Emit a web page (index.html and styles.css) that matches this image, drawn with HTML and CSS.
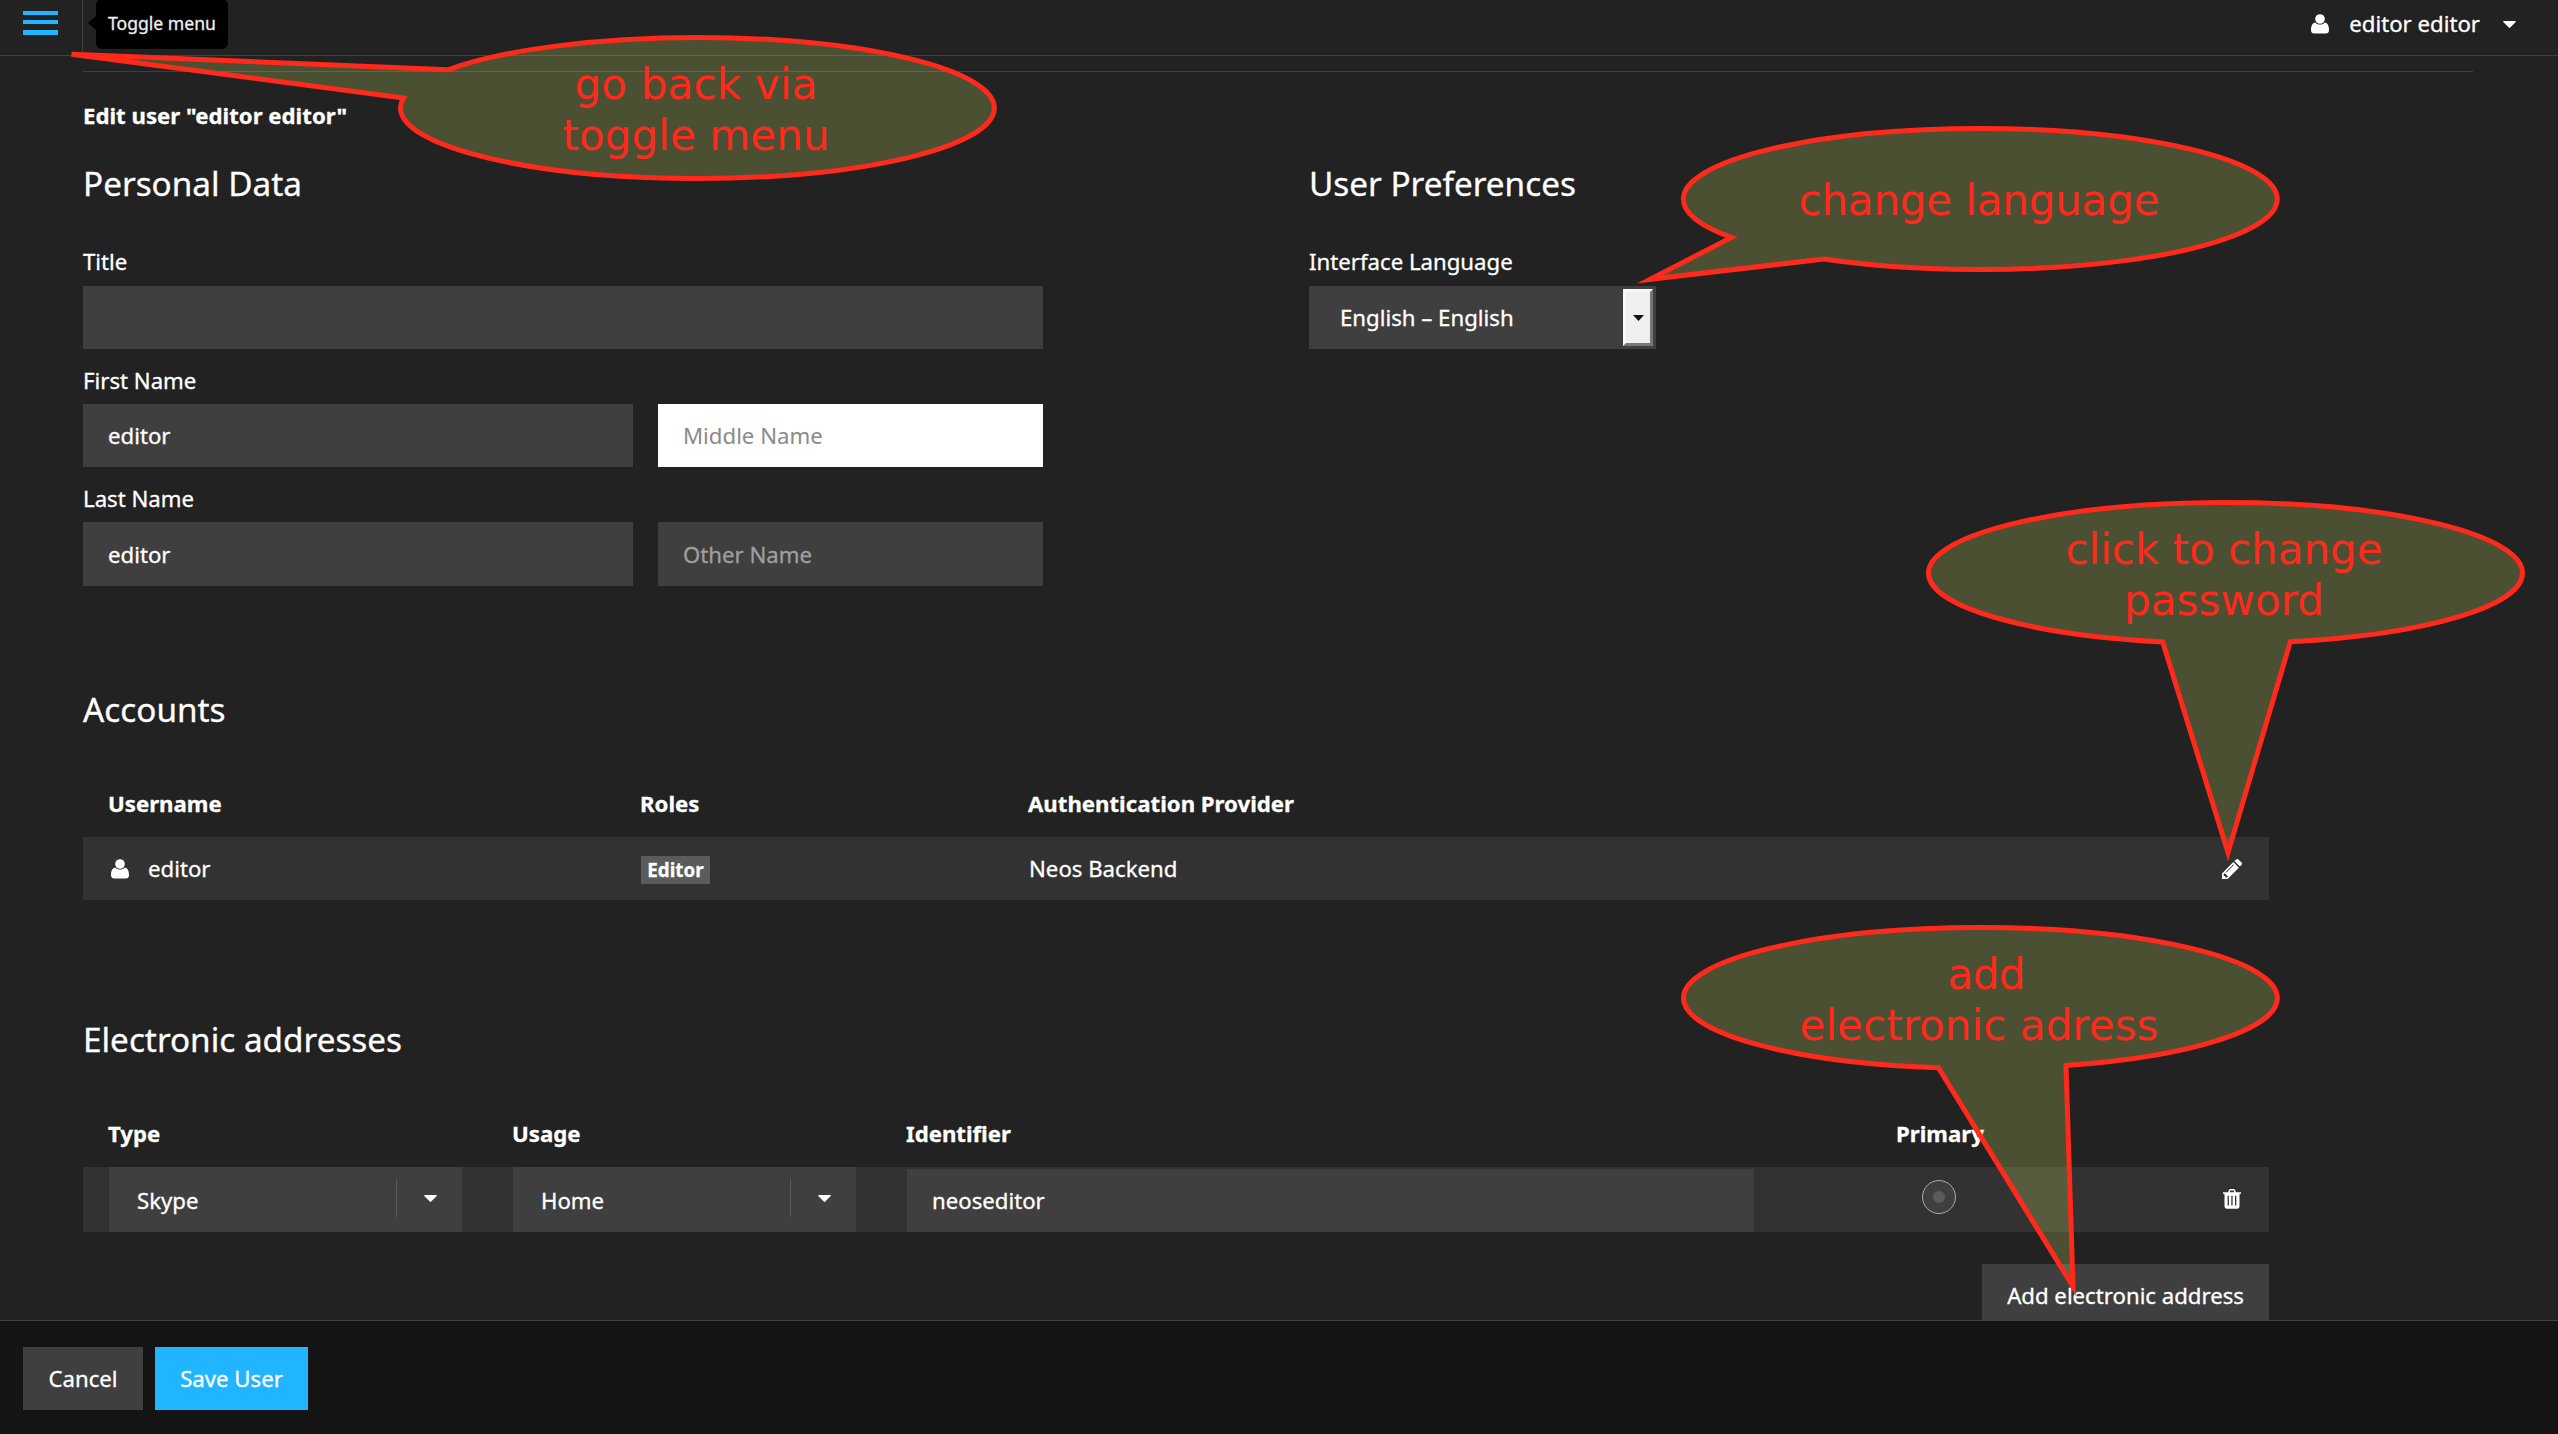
FILE: index.html
```html
<!DOCTYPE html>
<html lang="en">
<head>
<meta charset="utf-8">
<title>Edit user</title>
<link rel="stylesheet" href="styles.css">
</head>
<body>
<div class="app">
  <header class="topbar">
    <button class="menu-toggle" aria-label="Toggle menu">
      <svg width="35" height="24" viewBox="0 0 35 24"><path d="M0 0h35v4H0zM0 9h35v4H0zM0 19h35v5H0z"/></svg>
      <span class="tooltip">Toggle menu</span>
    </button>
    <div class="user-menu">
      <svg class="icon-user" width="18" height="20" viewBox="0 0 18 20"><circle cx="9" cy="5" r="4.8"/><path d="M4.2 8.6C1.6 9 0 11.500 0 16c0 2.300 1.200 3.600 3.400 3.600h11.200c2.200 0 3.400-1.300 3.400-3.600 0-4.500-1.600-7-4.200-7.400C12.500 10 11 10.600 9 10.600S5.500 10 4.200 8.600z"/></svg>
      <span class="user-name">editor editor</span>
      <svg class="caret" width="13" height="7" viewBox="0 0 13 7"><path d="M.6 0h11.800q.8.500.1 1.200L7.200 6.600q-.7.600-1.400 0L.5 1.200Q-.2.500.6 0z"/></svg>
    </div>
  </header>

  <main class="content">
    <hr class="rule">
    <p class="page-title">Edit user "editor editor"</p>
    <div class="columns">
      <section class="personal">
        <h2 class="heading">Personal Data</h2>
        <label class="label label-first">Title</label>
        <div class="field"></div>
        <label class="label">First Name</label>
        <div class="field-row">
          <div class="field">editor</div>
          <div class="field field-focus">Middle Name</div>
        </div>
        <label class="label">Last Name</label>
        <div class="field-row field-row-last">
          <div class="field">editor</div>
          <div class="field field-empty">Other Name</div>
        </div>
      </section>
      <section class="preferences">
        <h2 class="heading">User Preferences</h2>
        <label class="label label-first">Interface Language</label>
        <div class="language"><span>English – English</span>
          <span class="language-button"><svg width="11" height="6" viewBox="0 0 11 6"><path d="M0 0h11L5.500 6z"/></svg></span>
        </div>
      </section>
    </div>

    <section class="accounts">
      <h2 class="heading">Accounts</h2>
      <div class="grid accounts-grid thead"><span>Username</span><span>Roles</span><span>Authentication Provider</span></div>
      <div class="grid accounts-grid row">
        <span class="account-name"><svg class="icon-user" width="18" height="20" viewBox="0 0 18 20"><circle cx="9" cy="5" r="4.800"/><path d="M4.200 8.600C1.600 9 0 11.500 0 16c0 2.300 1.200 3.600 3.400 3.600h11.200c2.200 0 3.400-1.300 3.400-3.600 0-4.500-1.600-7-4.200-7.400C12.500 10 11 10.600 9 10.600S5.500 10 4.200 8.600z"/></svg>editor</span>
        <span><span class="badge">Editor</span></span>
        <span>Neos Backend</span>
        <svg class="row-icon" width="20" height="20" viewBox="0 0 20 20"><path fill-rule="evenodd" d="M0 20v-5.600L11.300 3.100l5.600 5.600L5.600 20zM1.700 15.400v1.500h1.500v1.500h1.500l1.200-1.200-3-3zM3.800 13l.6.600 7.500-7.500-.6-.6z"/><path d="M12.400 2.100l1.800-1.700q1.100-.8 2.200 0l3.200 3.200q.8 1.100 0 2.200L17.900 7.600z"/></svg>
      </div>
    </section>

    <section class="addresses">
      <h2 class="heading">Electronic addresses</h2>
      <div class="grid address-grid thead"><span>Type</span><span>Usage</span><span>Identifier</span><span>Primary</span></div>
      <div class="grid address-grid row">
        <div class="select select-type"><span>Skype</span><i class="divider"></i><svg class="caret" width="13" height="7" viewBox="0 0 13 7"><path d="M.6 0h11.800q.8.500.1 1.200L7.200 6.600q-.7.600-1.400 0L.5 1.200Q-.2.500.6 0z"/></svg></div>
        <div class="select select-usage"><span>Home</span><i class="divider"></i><svg class="caret" width="13" height="7" viewBox="0 0 13 7"><path d="M.6 0h11.800q.8.500.1 1.200L7.200 6.600q-.7.600-1.400 0L.5 1.200Q-.2.500.6 0z"/></svg></div>
        <div class="field identifier">neoseditor</div>
        <span class="radio"></span>
        <svg class="row-icon trash" width="18" height="20" viewBox="0 0 18 20"><path fill-rule="evenodd" d="M0 3.200h5L6 1q.4-1 1.500-1h3q1.100 0 1.500 1l1 2.200h5v1.500h-1.500v12.600q0 2.400-2 2.400h-11q-2 0-2-2.400V4.700H0zM6.600 3.200h4.800l-.8-1.700H7.400zM4.600 6.700v9.700h1.300V6.700zM8.300 6.700v9.700h1.300V6.700zM12 6.700v9.700h1.300V6.700z"/></svg>
      </div>
      <div class="add-line"><button class="button">Add electronic address</button></div>
    </section>
  </main>

  <footer class="footer">
    <button class="button button-cancel">Cancel</button>
    <button class="button button-primary">Save User</button>
  </footer>
</div>

<svg class="callouts" width="2558" height="1434" viewBox="0 0 2558 1434">
  <g class="bubble">
    <path d="M448 69.800A297 70.500 0 0 1 697.500 37.500A297 70.500 0 0 1 697.500 178.500A297 70.500 0 0 1 400.500 108A297 70.500 0 0 1 403.500 98L71.500 54.200z"/>
    <path d="M1731.500 237.500A297 70.500 0 0 1 1683.300 199A297 70.500 0 0 1 2277.300 199A297 70.500 0 0 1 1824 259L1650 279.300z"/>
    <path d="M2162.700 641.900A297 70.500 0 0 1 1928.500 573A297 70.500 0 0 1 2522.500 573A297 70.500 0 0 1 2290.300 641.800L2228 852.600z"/>
    <path d="M1938.400 1067.800A297 70.500 0 0 1 1683.400 998A297 70.500 0 0 1 2277.400 998A297 70.500 0 0 1 2066 1065.500L2073 1286.500z"/>
  </g>
  <g class="note">
    <text x="696" y="99" textLength="243">go back via</text>
    <text x="696" y="150" textLength="267">toggle menu</text>
    <text x="1979" y="215" textLength="361">change language</text>
    <text x="2224" y="564" textLength="317">click to change</text>
    <text x="2224" y="615" textLength="200">password</text>
    <text x="1986.500" y="989" textLength="78">add</text>
    <text x="1979" y="1040" textLength="359">electronic adress</text>
  </g>
</svg>
</body>
</html>
```
FILE: styles.css
```css
* { box-sizing: border-box; }
body {
  margin: 0;
  background: #222;
  color: #fff;
  font: 22.2px/32px "Noto Sans", sans-serif;
  -webkit-text-stroke: .3px;
}
svg { display: block; fill: #fff; flex: none; }
button { border: 0; font: inherit; color: inherit; background: none; }
h2, p { margin: 0; font-weight: 400; }

.app { display: flex; flex-direction: column; width: 2558px; height: 1434px; overflow: hidden; }

/* top bar */
.topbar {
  display: flex;
  justify-content: space-between;
  height: 56px;
  border-bottom: 1px solid #3f3f3f;
}
.menu-toggle {
  position: relative;
  width: 83px;
  padding: 11px 0 0 23px;
  border-right: 1px solid #3f3f3f;
  display: flex;
  align-items: flex-start;
}
.menu-toggle svg { fill: #22b5ff; }
.tooltip {
  position: absolute;
  left: 96px;
  top: -1px;
  width: 132px;
  height: 50px;
  border-radius: 6px;
  background: #000;
  color: #eee;
  font-size: 17.6px;
  line-height: 49px;
  text-align: center;
  white-space: nowrap;
}
.tooltip::before {
  content: "";
  position: absolute;
  left: -8px;
  top: 17px;
  border: 7px solid transparent;
  border-right: 8px solid #000;
  border-left: 0;
}
.user-menu { display: flex; align-items: center; height: 48px; padding-right: 42px; }
.user-name { margin: 0 23px 0 20px; }

/* content */
.content { flex: 1; min-height: 0; padding: 15px 85px 0 83px; overflow: hidden; }
.rule { height: 1px; margin: 0 0 28px; border: 0; background: #3f3f3f; }
.page-title { font-weight: 700; margin-bottom: 19px; }
.columns { display: grid; grid-template-columns: 960px 347px; column-gap: 266px; }
.heading { font-size: 33.3px; line-height: 64px; }
.label { display: block; margin: 16px 0 7px; }
.label-first { margin: 31px 0 8px; }
.field { height: 63px; padding: 0 25px; line-height: 63px; background: #3f3f3f; }
.field-row { display: grid; grid-template-columns: 550px 385px; column-gap: 25px; }
.field-row-last .field { height: 64px; line-height: 66px; }
.field-focus { background: #fff; color: #8a8a8a; -webkit-text-stroke: 0; }
.field-empty { color: #9f9f9f; }

.language {
  display: flex;
  justify-content: space-between;
  height: 63px;
  padding: 3px 3px 3px 31px;
  line-height: 57px;
  background: #3f3f3f;
}
.language-button {
  display: grid;
  place-items: center;
  width: 30px;
  border: 3px solid #f8f8f8;
  border-right-color: #777;
  border-bottom-color: #777;
  background: #efefef;
}
.language-button svg { fill: #111; }

/* tables */
.accounts { width: 2186px; margin-top: 91px; }
.addresses { width: 2186px; margin-top: 107px; }
.grid { display: grid; align-items: center; padding-left: 26px; }
.thead { margin: 47px 0 17px; padding-left: 25px; font-weight: 700; }
.row { background: #323232; }
.accounts-grid { grid-template-columns: 532px 388px 1193px 20px; }
.accounts-grid.row { height: 63px; }
.account-name { display: flex; align-items: center; gap: 19px; padding-left: 2px; }
.badge {
  display: block;
  width: 69px;
  height: 28px;
  margin-top: 3px;
  background: #5b5b5b;
  font-size: 18.8px;
  font-weight: 700;
  line-height: 28px;
  text-align: center;
  text-shadow: 0 -1px 0 rgba(0, 0, 0, .25);
}
.address-grid { grid-template-columns: 404px 394px 990px 326px 18px; }
.address-grid.row { height: 65px; }
.select { display: flex; align-items: center; height: 65px; padding-left: 28px; background: #3f3f3f; }
.select span { flex: 1; padding-top: 2px; }
.select-type { width: 353px; }
.select-usage { width: 343px; }
.divider { width: 1px; height: 38px; margin: 0 27px 4px 0; background: #5b5b5b; }
.select .caret { margin: 0 25px 2px 0; }
.identifier { width: 847px; align-self: end; }
.radio {
  display: grid;
  place-items: center;
  width: 34px;
  height: 34px;
  margin: 0 0 5px 25px;
  border: 1px solid #aaa;
  border-radius: 50%;
  background: #3f3f3f;
}
.radio::before { content: ""; width: 12px; height: 12px; border-radius: 50%; background: #5b5b5b; }
.trash { margin-bottom: 1px; }
.add-line { display: flex; justify-content: flex-end; margin-top: 32px; }

.button { height: 63px; padding: 0 25px; background: #3f3f3f; line-height: 63px; white-space: nowrap; }
.button-cancel { width: 120px; }
.button-primary { width: 153px; background: #22b5ff; }

.footer {
  display: flex;
  gap: 12px;
  height: 114px;
  padding: 26px 23px;
  border-top: 1px solid #3f3f3f;
  background: #141414;
}

/* annotation layer */
.callouts { position: absolute; left: 0; top: 0; }
.bubble { fill: rgba(198, 218, 102, .25); stroke: #ff2a1c; stroke-width: 5px; stroke-miterlimit: 10; }
.note { fill: #ff2a1c; font: 42px "DejaVu Sans", sans-serif; text-anchor: middle; -webkit-text-stroke: 0; }
```
